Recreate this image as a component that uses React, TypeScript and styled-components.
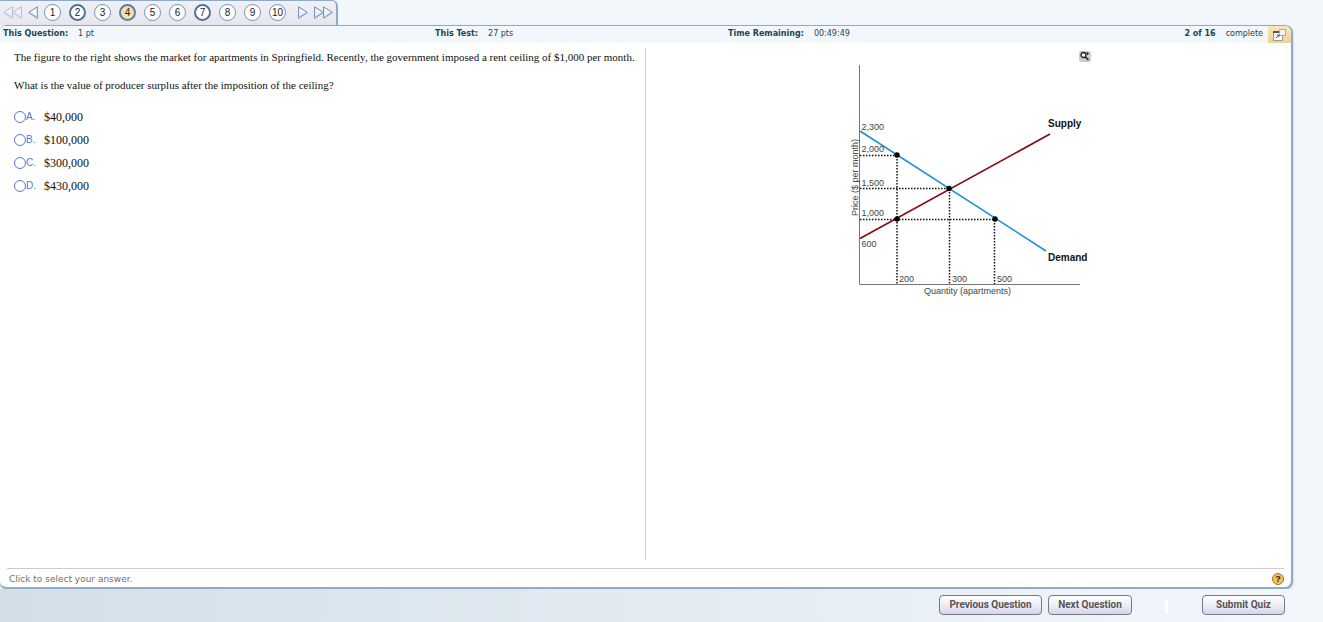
import React, { useState } from "react";
import styled, { createGlobalStyle, css } from "styled-components";

const GlobalStyle = createGlobalStyle`
  *, *::before, *::after { box-sizing: border-box; }
  body {
    margin: 0;
    background: #f2f7fc;
    font-family: "DejaVu Sans", Verdana, sans-serif;
  }
`;

const Page = styled.div`
  display: flex;
  flex-direction: column;
  min-height: 100vh;
`;

const NavTab = styled.nav`
  display: flex;
  align-items: center;
  align-self: flex-start;
  gap: 6px;
  height: 25px;
  padding: 0 3px 2px;
  background: linear-gradient(#f0f1f6, #e6e5ee);
  border: solid #8fa9c8;
  border-width: 1px 2px 0 0;
  border-radius: 0 6px 0 0;
`;

const ArrowButton = styled.button<{ $faded?: boolean }>`
  display: flex;
  padding: 0;
  border: 0;
  background: none;
  opacity: ${(p) => (p.$faded ? 0.45 : 1)};
`;

const NumberButton = styled.button<{ $ring?: boolean; $current?: boolean }>`
  display: flex;
  align-items: center;
  justify-content: center;
  width: 17px;
  height: 17px;
  padding: 0;
  border: 1px solid #6f93b8;
  border-radius: 50%;
  background: #fff;
  color: #222;
  font: 10px "Liberation Sans", Arial, sans-serif;
  ${(p) => p.$ring && css`border: 2px solid #4f7499;`}
  ${(p) => p.$current && css`background: #f5dfb0; border: 2px solid #5f7f9b;`}
`;

const Numbers = styled.div`
  display: flex;
  gap: 8px;
  padding-right: 6px;
`;

const Panel = styled.main`
  display: flex;
  flex: 1;
  flex-direction: column;
  margin-right: 30px;
  overflow: hidden;
  background: #fff;
  border: solid #8eabc8;
  border-width: 1px 2px 2px 0;
  border-radius: 6px 8px 8px 7px;
  box-shadow: 0 1px 2px #a9b5c0;
`;

const InfoBar = styled.header`
  display: grid;
  grid-template-columns: 432fr 293fr 563fr;
  height: 17px;
  padding-left: 3px;
  background: #f2f7fc;
  color: #1f4650;
  font-size: 8px;
  line-height: 16px;
`;

const InfoItem = styled.div`
  display: flex;
  gap: 10px;
  white-space: nowrap;
`;

const InfoEnd = styled.div`
  display: flex;
  justify-content: space-between;
`;

const PopupButton = styled.button`
  display: flex;
  align-items: center;
  justify-content: center;
  width: 23px;
  height: 17px;
  margin-left: -5px;
  padding: 0;
  border: 0;
  background: linear-gradient(#f9e5b6, #efd096);
`;

const Content = styled.div`
  display: grid;
  flex: 1;
  grid-template-columns: 1fr 1fr;
  padding: 5px 0 8px;
`;

const QuestionPane = styled.section`
  padding: 1px 6px 0 14px;
  border-right: 1px solid #ccc;
  color: #111;
  font: 12px/16px "Liberation Serif", "Times New Roman", serif;
`;

const Prompt = styled.p`
  margin: 0 0 12px;
  font-size: 11px;
`;

const Choices = styled.fieldset`
  margin: 12px 0 0;
  padding: 0;
  border: 0;
`;

const Choice = styled.label`
  display: flex;
  align-items: center;
  height: 23px;
`;

const Radio = styled.input`
  appearance: none;
  width: 12px;
  height: 12px;
  margin: 1px 0 0;
  border: 1px solid #5577dd;
  border-radius: 50%;
  &:checked { box-shadow: inset 0 0 0 2px #fff; background: #5577dd; }
`;

const Letter = styled.span`
  width: 18px;
  color: #5577dd;
  font: 10px "Liberation Sans", Arial, sans-serif;
`;

const FigurePane = styled.figure`
  display: flex;
  flex-direction: column;
  align-items: center;
  margin: 0;
`;

const Figure = styled.div`
  display: flex;
  flex-direction: column;
  align-items: flex-end;
  padding-top: 3px;
`;

const ZoomButton = styled.button`
  display: flex;
  padding: 0;
  border: 0;
  border-radius: 2px;
  background: #ccc;
`;

const Hint = styled.footer`
  display: flex;
  align-items: center;
  justify-content: space-between;
  height: 19px;
  margin: 0 7px;
  padding: 2px 0 0 2px;
  border-top: 1px solid #ccc;
  color: #707070;
  font-size: 9px;
`;

const HelpButton = styled.button`
  display: flex;
  align-items: center;
  justify-content: center;
  width: 12px;
  height: 12px;
  padding: 0;
  border: 1px solid #9a782f;
  border-radius: 50%;
  background: #f7c052;
  color: #222;
  font: bold 9px "Liberation Sans", Arial, sans-serif;
`;

const Actions = styled.div`
  display: flex;
  align-items: flex-start;
  justify-content: flex-end;
  height: 33px;
  padding: 6px 38px 0 0;
  background: linear-gradient(90deg, #d4dee7, #dce6ee 30%, #f2f7fc 98%);
`;

const ActionButton = styled.button<{ $width: number }>`
  width: ${(p) => p.$width}px;
  height: 20px;
  margin-left: 6px;
  padding: 0 0 2px;
  border: 1px solid #777985;
  border-radius: 4px;
  background: linear-gradient(#fff, #eeeef6 50%, #d5d4ec);
  color: #555;
  font: bold 10px Roboto, Arial, sans-serif;
`;

const Divider = styled.span`
  width: 3px;
  height: 15px;
  margin: 4px 28px 0 33px;
  background: #fff;
`;

const ChartText = styled.text<{ $strong?: boolean }>`
  fill: ${(p) => (p.$strong ? "#111" : "#444")};
  font: ${(p) => (p.$strong ? "bold 10px" : "9px")} "Liberation Sans", Arial, sans-serif;
`;

function Arrow({ left, double }: { left?: boolean; double?: boolean }) {
  const width = double ? 19 : 10;
  return (
    <svg width={width} height="13" viewBox={`0 0 ${width} 13`} aria-hidden="true">
      <g
        transform={left ? `translate(${width} 0) scale(-1 1)` : undefined}
        fill="#f8fbff"
        stroke="#6186b8"
        strokeLinejoin="round"
      >
        <path d="M.7 .8V12.2L9.3 6.5Z" />
        {double && <path d="M9.7 .8V12.2L18.3 6.5Z" />}
        <path d="M1.700 10.200L7.500 6.500" stroke="#b5cce8" />
        {double && <path d="M10.700 10.200L16.500 6.500" stroke="#b5cce8" />}
      </g>
    </svg>
  );
}

function MarketChart() {
  const points = [[52, 93], [104, 126.5], [52, 157], [150, 157]];
  const prices: [string, number][] = [
    ["2,300", 68], ["2,000", 90], ["1,500", 123.5], ["1,000", 154], ["600", 184.5],
  ];
  const quantities: [string, number][] = [["200", 54], ["300", 107], ["500", 152]];
  return (
    <svg width="246" height="240" viewBox="0 0 246 240" role="img" aria-label="Supply and demand for apartments">
      <path d="M14.5 3V222.500H235" fill="none" stroke="#777" />
      <path d="M15 69L201 189" stroke="#1c8fd6" strokeWidth="1.5" />
      <path d="M15 176.500L205 72" stroke="#8b0a10" strokeWidth="1.7" />
      <path
        d="M15 93.500H52M15 126.500H104M15 157.500H150M52 94V222M104.500 127V222M149.500 158V222"
        fill="none" stroke="#111" strokeWidth="1.5" strokeDasharray="1.5 1.5"
      />
      {points.map(([x, y]) => <circle key={`${x}-${y}`} cx={x} cy={y} r="2.7" />)}
      {prices.map(([label, y]) => <ChartText key={label} x="16.500" y={y}>{label}</ChartText>)}
      {quantities.map(([label, x]) => <ChartText key={label} x={x} y="220">{label}</ChartText>)}
      <ChartText $strong x="203" y="65">Supply</ChartText>
      <ChartText $strong x="203" y="199">Demand</ChartText>
      <ChartText x="79" y="232">Quantity (apartments)</ChartText>
      <ChartText transform="translate(13 154) rotate(-90)">Price ($ per month)</ChartText>
    </svg>
  );
}

const answers = ["$40,000", "$100,000", "$300,000", "$430,000"];

export default function App() {
  const [choice, setChoice] = useState<number | null>(null);
  return (
    <Page>
      <GlobalStyle />
      <NavTab aria-label="Questions">
        <ArrowButton $faded aria-label="First question"><Arrow left double /></ArrowButton>
        <ArrowButton aria-label="Previous page"><Arrow left /></ArrowButton>
        <Numbers>
          {Array.from({ length: 10 }, (_, i) => i + 1).map((n) => (
            <NumberButton key={n} $ring={n === 2 || n === 7} $current={n === 4}>{n}</NumberButton>
          ))}
        </Numbers>
        <ArrowButton aria-label="Next page"><Arrow /></ArrowButton>
        <ArrowButton aria-label="Last question"><Arrow double /></ArrowButton>
      </NavTab>
      <Panel>
        <InfoBar>
          <InfoItem><b>This Question:</b><span>1 pt</span></InfoItem>
          <InfoItem><b>This Test:</b><span>27 pts</span></InfoItem>
          <InfoEnd>
            <InfoItem><b>Time Remaining:</b><span>00:49:49</span></InfoItem>
            <InfoItem>
              <b>2 of 16</b><span>complete</span>
              <PopupButton aria-label="Open in a new window">
                <svg width="13" height="12" viewBox="0 0 13 12">
                  <path d="M.5 2.500H9.500V11.500H.5Z" fill="#fff" stroke="#999" />
                  <path d="M0 2H7V4H0Z" fill="#555" />
                  <path d="M6.500 .5H12.500V6.500H6.500Z" fill="#f5f3f0" stroke="#aaa" />
                  <path d="M3 9L6 6M4 6H6V8" fill="none" stroke="#555" />
                </svg>
              </PopupButton>
            </InfoItem>
          </InfoEnd>
        </InfoBar>
        <Content>
          <QuestionPane>
            <Prompt>
              The figure to the right shows the market for apartments in Springfield. Recently, the government imposed a rent ceiling of $1,000 per month.
            </Prompt>
            <Prompt>What is the value of producer surplus after the imposition of the ceiling?</Prompt>
            <Choices aria-label="Answers">
              {answers.map((answer, i) => (
                <Choice key={answer}>
                  <Radio type="radio" name="answer" checked={choice === i} onChange={() => setChoice(i)} />
                  <Letter>{"ABCD"[i]}.</Letter>
                  <span>{answer}</span>
                </Choice>
              ))}
            </Choices>
          </QuestionPane>
          <FigurePane>
            <Figure>
              <ZoomButton aria-label="Enlarge the figure">
                <svg width="12" height="11" viewBox="0 0 12 11">
                  <circle cx="4.500" cy="4" r="2.500" fill="#eee" stroke="#222" strokeWidth="1.300" />
                  <path d="M6.300 6L9.500 9" stroke="#222" strokeWidth="1.600" />
                  <path d="M8.500 1V4M7.500 2.500H10" stroke="#333" />
                </svg>
              </ZoomButton>
              <MarketChart />
            </Figure>
          </FigurePane>
        </Content>
        <Hint>
          <span>Click to select your answer.</span>
          <HelpButton aria-label="Help">?</HelpButton>
        </Hint>
      </Panel>
      <Actions>
        <ActionButton $width={103}>Previous Question</ActionButton>
        <ActionButton $width={84}>Next Question</ActionButton>
        <Divider />
        <ActionButton $width={83}>Submit Quiz</ActionButton>
      </Actions>
    </Page>
  );
}
